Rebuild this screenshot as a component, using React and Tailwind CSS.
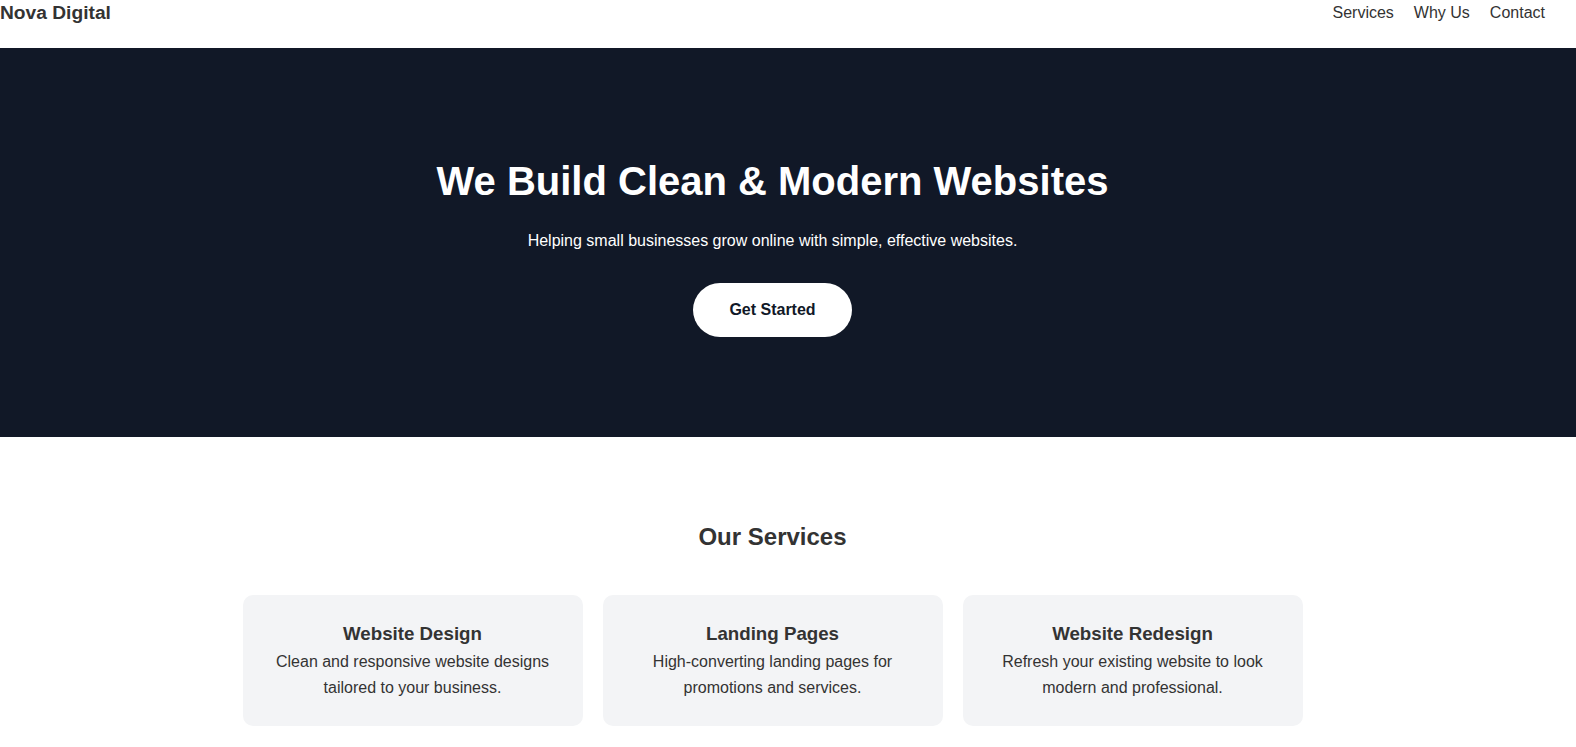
const services = [
  { title: 'Website Design', text: 'Clean and responsive website designs tailored to your business.' },
  { title: 'Landing Pages', text: 'High-converting landing pages for promotions and services.' },
  { title: 'Website Redesign', text: 'Refresh your existing website to look modern and professional.' },
];

const reasons = [
  { title: 'Fast Delivery', text: 'Get your website live in days, not months.' },
  { title: 'Affordable Pricing', text: 'Simple packages that fit small business budgets.' },
  { title: 'Ongoing Support', text: 'We stay with you after launch to keep things running.' },
];

function Card({ title, text }) {
  return (
    <div className="w-[340px] shrink-0 bg-[#f3f4f6] rounded-[10px] px-6 pt-[27px] pb-[25px] text-center">
      <h3 className="text-[18.72px] leading-[24px] font-bold text-[#333]">{title}</h3>
      <p className="text-[16px] leading-[26px] text-[#333] mt-[3px]">{text}</p>
    </div>
  );
}

export default function App() {
  return (
    <div className="font-['Liberation_Sans',Arial,sans-serif] text-[#333] bg-white">
      <header className="h-[48px] flex justify-between items-start pr-[31px]">
        <div className="text-[19.2px] leading-[24px] font-bold pt-[1px]">Nova Digital</div>
        <nav className="flex gap-5 text-[16px] leading-[26px]">
          <a href="#services">Services</a>
          <a href="#why">Why Us</a>
          <a href="#contact">Contact</a>
        </nav>
      </header>

      <section className="bg-[#111827] text-white h-[389px] pr-[31px] pt-[110px] text-center">
        <h1 className="text-[40px] leading-[46px] font-bold">We Build Clean &amp; Modern Websites</h1>
        <p className="text-[16px] leading-[18px] mt-[28px]">Helping small businesses grow online with simple, effective websites.</p>
        <button className="mt-[33px] bg-white text-[#111827] font-bold text-[16px] rounded-full w-[159px] h-[54px]">
          Get Started
        </button>
      </section>

      <section id="services" className="pt-[86px] pb-[80px] pr-[31px] text-center">
        <h2 className="text-[24px] leading-[28px] font-bold">Our Services</h2>
        <div className="flex justify-center gap-5 mt-[44px]">
          {services.map((s) => <Card key={s.title} {...s} />)}
        </div>
      </section>

      <section id="why" className="bg-[#f9fafb] pt-[60px] pb-[60px] pr-[31px] text-center">
        <h2 className="text-[24px] leading-[28px] font-bold">Why Choose Us</h2>
        <div className="flex justify-center gap-5 mt-[45px]">
          {reasons.map((s) => <Card key={s.title} {...s} />)}
        </div>
      </section>

      <section id="contact" className="pt-[45px] pb-[45px] pr-[31px] text-center">
        <h2 className="text-[24px] leading-[28px] font-bold">Contact Us</h2>
        <p className="text-[16px] mt-4">Ready to start your project? Email us at hello@novadigital.com</p>
      </section>

      <footer className="bg-[#111827] text-white text-center text-[14px] py-5">
        © 2025 Nova Digital. All rights reserved.
      </footer>
    </div>
  );
}
